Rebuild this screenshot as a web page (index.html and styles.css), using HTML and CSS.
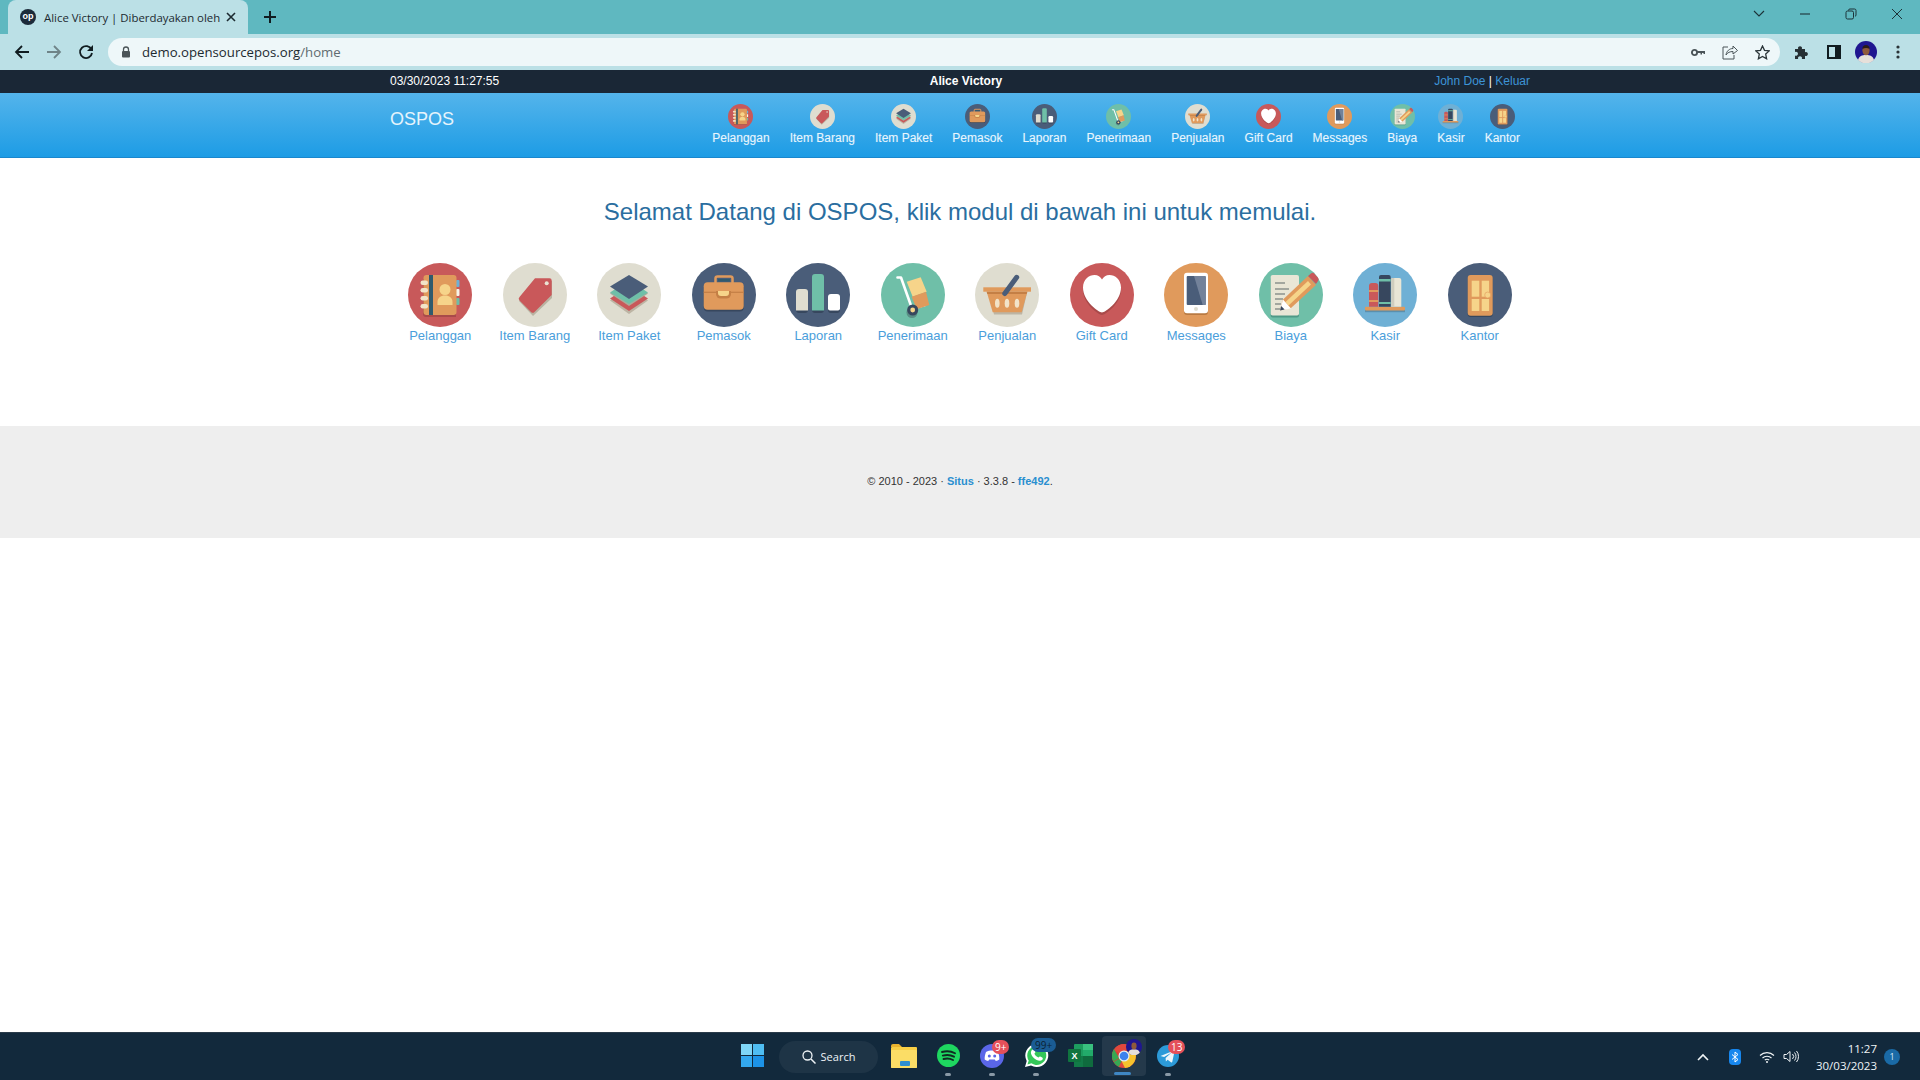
FILE: index.html
```html
<!DOCTYPE html>
<html lang="id">
<head>
<meta charset="utf-8">
<title>Alice Victory | OSPOS</title>
<link rel="stylesheet" href="styles.css">
</head>
<body>
<svg class="defs" width="0" height="0" aria-hidden="true">
  <symbol id="i-pelanggan" viewBox="0 0 64 64">
    <circle cx="32" cy="32" r="32" fill="#c8595a"/>
    <path d="M15 16h33v38H18a3 3 0 0 1-3-3z" fill="#a94a4a"/>
    <rect x="48" y="17" width="3.5" height="7" rx="1" fill="#6cb0d5"/>
    <rect x="48" y="26" width="3.5" height="7" rx="1" fill="#f7f4ea"/>
    <rect x="48" y="35" width="3.5" height="7" rx="1" fill="#6dbda7"/>
    <rect x="15.500" y="12" width="33" height="40" rx="3" fill="#e09a5c"/>
    <rect x="21" y="12" width="4" height="40" fill="#2f5a6e"/>
    <rect x="12.500" y="17.500" width="7.500" height="4.500" rx="2.200" fill="#f2e3c8"/>
    <rect x="12.500" y="25" width="7.500" height="4.500" rx="2.200" fill="#f2e3c8"/>
    <rect x="12.500" y="33" width="7.500" height="4.500" rx="2.200" fill="#f2e3c8"/>
    <rect x="12.500" y="41" width="7.500" height="4.500" rx="2.200" fill="#f2e3c8"/>
    <circle cx="37" cy="26.500" r="5.500" fill="#f6d48a"/>
    <path d="M29.500 42v-3c0-4 3-6.500 7.500-6.500s7.500 2.500 7.500 6.500v3z" fill="#f6d48a"/>
  </symbol>
  <symbol id="i-barang" viewBox="0 0 64 64">
    <circle cx="32" cy="32" r="32" fill="#dfddd0"/>
    <path d="M31 18h18v17L30 53 16 38z" fill="#b9b3a2"/>
    <path d="M32 15.300h14.500a2.200 2.200 0 0 1 2.200 2.200V32L31.500 49a2.500 2.500 0 0 1-3.500 0L16.500 37.500a2.500 2.500 0 0 1 0-3.500z" fill="#c9585a"/>
    <circle cx="43.700" cy="20.300" r="2" fill="#e9e3d3"/>
  </symbol>
  <symbol id="i-paket" viewBox="0 0 64 64">
    <circle cx="32" cy="32" r="32" fill="#dfddd0"/>
    <path d="M32 24l19 13.500L32 51 13 37.500z" fill="#bdb5a4"/>
    <path d="M32 23l19 12.500L32 48 13 35.500z" fill="#c9585a"/>
    <path d="M32 19l19 11.500L32 43 13 30.500z" fill="#a9ac9b"/>
    <path d="M32 17l19 12.500L32 41 13 29.500z" fill="#6fbfa8"/>
    <path d="M32 12l19 11.500L32 36 13 23.500z" fill="#4a5d79"/>
  </symbol>
  <symbol id="i-pemasok" viewBox="0 0 64 64">
    <circle cx="32" cy="32" r="32" fill="#4a5d79"/>
    <rect x="23.500" y="13.500" width="17" height="9" rx="2" fill="none" stroke="#e09a5c" stroke-width="2.500"/>
    <rect x="26" y="16" width="12" height="2.500" fill="#2f5a6e"/>
    <rect x="11.700" y="21" width="40" height="27.500" rx="4" fill="#37475e"/>
    <rect x="11.700" y="19.300" width="40" height="27.500" rx="4" fill="#e09a5c"/>
    <rect x="11.700" y="28.700" width="40" height="1.200" fill="#c47f45"/>
    <path d="M24 28h15v3a4.500 4.500 0 0 1-4.500 4.500h-6A4.500 4.500 0 0 1 24 31z" fill="#c47f45"/>
    <path d="M26 28h11v2a3 3 0 0 1-3 3h-5a3 3 0 0 1-3-3z" fill="#f6d48a"/>
  </symbol>
  <symbol id="i-laporan" viewBox="0 0 64 64">
    <circle cx="32" cy="32" r="32" fill="#4a5d79"/>
    <rect x="10" y="28" width="12" height="22" rx="3" fill="#37475e"/>
    <rect x="26" y="13" width="12" height="37" rx="3" fill="#37475e"/>
    <rect x="42" y="33" width="12" height="17" rx="3" fill="#37475e"/>
    <path d="M10 29a3 3 0 0 1 3-3h6a3 3 0 0 1 3 3v18.500H10z" fill="#dfddd0"/>
    <path d="M26 14a3 3 0 0 1 3-3h6a3 3 0 0 1 3 3v33.500H26z" fill="#6fbfa8"/>
    <path d="M42 34a3 3 0 0 1 3-3h6a3 3 0 0 1 3 3v11.500a2 2 0 0 1-2 2h-8a2 2 0 0 1-2-2z" fill="#fff"/>
  </symbol>
  <symbol id="i-penerimaan" viewBox="0 0 64 64">
    <circle cx="32" cy="32" r="32" fill="#6fbfa8"/>
    <path d="M16.500 14.500h3.500l11 31 13-3.500" fill="none" stroke="#fff" stroke-width="2.600" stroke-linejoin="round" stroke-linecap="round"/>
    <path d="M25.700 18.700l14-4.400 6 14.400-14 5z" fill="#f6d48a"/>
    <path d="M30.700 33.700l14.300-5 3.300 13.300-12.600 4.300z" fill="#e09a5c"/>
    <circle cx="31" cy="49.500" r="5.500" fill="#5a8f85"/>
    <circle cx="31.700" cy="47" r="5.500" fill="#37475e"/>
    <circle cx="31.700" cy="47" r="2.400" fill="#f6d48a"/>
  </symbol>
  <symbol id="i-penjualan" viewBox="0 0 64 64">
    <circle cx="32" cy="32" r="32" fill="#dfddd0"/>
    <path d="M14 30h38l-5 21.500H19z" fill="#bdb5a4"/>
    <rect x="8.300" y="24.300" width="47.700" height="4.400" fill="#e09a5c"/>
    <path d="M11.700 28.700h40.600l-5.600 20.600H17.700z" fill="#e09a5c"/>
    <path d="M11.700 28.700h40.600l-.6 2.200H12.300z" fill="#c47f45"/>
    <ellipse cx="22.300" cy="40.300" rx="2.300" ry="4.500" fill="#f2e3c8"/>
    <ellipse cx="32" cy="40.300" rx="2.300" ry="4.500" fill="#f2e3c8"/>
    <ellipse cx="42" cy="40.300" rx="2.300" ry="4.500" fill="#f2e3c8"/>
    <path d="M29.800 30.500L41.700 14.300" stroke="#4a5d79" stroke-width="5" stroke-linecap="round"/>
  </symbol>
  <symbol id="i-gift" viewBox="0 0 64 64">
    <circle cx="32" cy="32" r="32" fill="#c8595a"/>
    <path d="M32 52c-3 0-19-11-19-25 0-8 6-13 11.500-13 3.500 0 6 2 7.500 4.500C33.500 16 36 14 39.500 14 45 14 51 19 51 27c0 14-16 25-19 25z" fill="#a94a4a"/>
    <path d="M32 49.500c-3 0-19-11-19-25 0-8 6-12.500 11.500-12.500 3.500 0 6 2 7.500 4.500C33.500 14 36 12 39.500 12 45 12 51 16.500 51 24.500c0 14-16 25-19 25z" fill="#fff"/>
  </symbol>
  <symbol id="i-messages" viewBox="0 0 64 64">
    <circle cx="32" cy="32" r="32" fill="#e09a5c"/>
    <rect x="20" y="11" width="24" height="41" rx="3" fill="#b97a42"/>
    <rect x="20" y="9.700" width="24" height="40.600" rx="3" fill="#fff"/>
    <rect x="22.700" y="13" width="19" height="29" rx="1" fill="#4a5d79"/>
    <path d="M30 13h10.700a1 1 0 0 1 1 1v28h-3z" fill="#73829a"/>
    <circle cx="32" cy="46" r="2" fill="#dfddd0"/>
  </symbol>
  <symbol id="i-biaya" viewBox="0 0 64 64">
    <circle cx="32" cy="32" r="32" fill="#6fbfa8"/>
    <rect x="11.700" y="14" width="28.300" height="40.500" rx="2" fill="#4f9a86"/>
    <rect x="11.700" y="12" width="28.300" height="40.500" rx="2" fill="#e9e6d6"/>
    <path d="M16 20h10M16 26h14M16 31h10M16 36h8M16 41h6M16 46h5" stroke="#8c938d" stroke-width="1.300"/>
    <path d="M21 47.500l3-11 25-23.500 8 9-25 23z" fill="#e09a5c"/>
    <path d="M26.500 39L49 18l3 3.500-22.500 21z" fill="#f6d48a"/>
    <path d="M49 13l3-2.500a2.500 2.500 0 0 1 3.200 0l3.800 4.300a2.500 2.500 0 0 1 0 3.200l-2 3z" fill="#c9585a"/>
    <path d="M21 47.500l3-11 8 9z" fill="#fff"/>
    <path d="M21 47.500l1.100-4.500 3.500 3.500z" fill="#37475e"/>
  </symbol>
  <symbol id="i-kasir" viewBox="0 0 64 64">
    <circle cx="32" cy="32" r="32" fill="#6fb0d5"/>
    <rect x="12" y="46" width="40" height="3.200" fill="#5b8fad"/>
    <rect x="12" y="43.700" width="40" height="3.800" rx="1" fill="#e09a5c"/>
    <path d="M16 23a3 3 0 0 1 3-3h3.300a3 3 0 0 1 3 3v20.700H16z" fill="#c9585a"/>
    <rect x="16" y="27" width="9.300" height="2" fill="#e09a5c"/>
    <rect x="16" y="37" width="9.300" height="2" fill="#e09a5c"/>
    <path d="M26 14a2 2 0 0 1 2-2h7.700a2 2 0 0 1 2 2v29.700H26z" fill="#37475e"/>
    <rect x="26" y="16" width="11.700" height="2.500" fill="#6fbfa8"/>
    <rect x="26" y="39" width="11.700" height="2" fill="#6fbfa8"/>
    <path d="M38.300 17a2 2 0 0 1 2-2h6a2 2 0 0 1 2 2v26.700h-10z" fill="#e9e6d6"/>
    <rect x="38.300" y="15" width="3" height="28.700" fill="#cfcdbe"/>
  </symbol>
  <symbol id="i-kantor" viewBox="0 0 64 64">
    <circle cx="32" cy="32" r="32" fill="#4a5d79"/>
    <rect x="19.700" y="13" width="25" height="41" rx="3" fill="#37475e"/>
    <rect x="19.700" y="12" width="25" height="40.700" rx="3" fill="#e09a5c"/>
    <rect x="23.700" y="17.700" width="7.600" height="16" fill="#f6d48a"/>
    <rect x="33.700" y="17.700" width="7.400" height="16" fill="#f6d48a"/>
    <rect x="23.700" y="36" width="7.600" height="12" fill="#f6d48a"/>
    <rect x="33.700" y="36" width="7.400" height="12" fill="#f6d48a"/>
    <circle cx="39.700" cy="32" r="3" fill="#f6d48a" stroke="#e09a5c" stroke-width=".6"/>
  </symbol>
</svg>

<div class="app">
  <div class="tabstrip">
    <div class="tab">
      <span class="favicon">op</span>
      <span class="tab-title">Alice Victory | Diberdayakan oleh</span>
      <svg class="tab-close" width="10" height="10" viewBox="0 0 10 10"><path d="M1 1l8 8M9 1l-8 8" stroke="#1c2a30" stroke-width="1.600"/></svg>
    </div>
    <svg class="tab-new" width="14" height="14" viewBox="0 0 14 14"><path d="M7 1v12M1 7h12" stroke="#101c20" stroke-width="2"/></svg>
    <div class="win-controls">
      <span class="win-btn"><svg width="12" height="8" viewBox="0 0 12 8"><path d="M1 1l5 5 5-5" fill="none" stroke="#1c3238" stroke-width="1.100"/></svg></span>
      <span class="win-btn"><svg width="12" height="2" viewBox="0 0 12 2"><path d="M1 1h10" stroke="#1c3238" stroke-width="1.100"/></svg></span>
      <span class="win-btn"><svg width="12" height="12" viewBox="0 0 12 12"><path d="M3.500 2.500V2a1.500 1.500 0 0 1 1.500-1h4.500A1.500 1.500 0 0 1 11 2.500V7a1.500 1.500 0 0 1-1 1.400" fill="none" stroke="#1c3238"/><rect x="1" y="3" width="7.500" height="8" rx="1.500" fill="none" stroke="#1c3238"/></svg></span>
      <span class="win-btn"><svg width="12" height="12" viewBox="0 0 12 12"><path d="M1 1l10 10M11 1L1 11" stroke="#1c3238" stroke-width="1"/></svg></span>
    </div>
  </div>

  <div class="toolbar">
    <span class="tool-btn"><svg width="16" height="16" viewBox="0 0 16 16"><path d="M15 8H2M8 2L2 8l6 6" fill="none" stroke="#101c20" stroke-width="1.800"/></svg></span>
    <span class="tool-btn"><svg width="16" height="16" viewBox="0 0 16 16"><path d="M1 8h13M8 2l6 6-6 6" fill="none" stroke="#6f8488" stroke-width="1.800"/></svg></span>
    <span class="tool-btn"><svg width="16" height="16" viewBox="0 0 16 16"><path d="M13.500 5.500A6 6 0 1 0 14 9" fill="none" stroke="#101c20" stroke-width="1.800"/><path d="M15 1v6H9z" fill="#101c20"/></svg></span>
    <div class="omnibox">
      <svg class="lock" width="10" height="12" viewBox="0 0 10 12"><path d="M2.500 5V3.500a2.500 2.500 0 0 1 5 0V5" fill="none" stroke="#4a5458" stroke-width="1.300"/><rect x="1" y="5" width="8" height="6.500" rx="1" fill="#4a5458"/></svg>
      <span class="url">demo.opensourcepos.org<span class="url-path">/home</span></span>
      <span class="omni-btn"><svg width="14" height="9" viewBox="0 0 14 9"><circle cx="3.500" cy="4.500" r="2.600" fill="none" stroke="#4a5458" stroke-width="1.900"/><path d="M6 3h8v3h-1.500V5H11v1.500H9.500V5H6z" fill="#4a5458"/></svg></span>
      <span class="omni-btn"><svg width="16" height="16" viewBox="0 0 16 16"><path d="M6 3H1v12h11v-4" fill="none" stroke="#4a5458"/><path d="M4 11c.5-4 3.500-6.500 7-6.500V2l4.500 4.500L11 10V7.500C8 7.500 5.500 8.500 4 11z" fill="none" stroke="#4a5458"/></svg></span>
      <span class="omni-btn"><svg width="15" height="15" viewBox="0 0 15 15"><path d="M7.500 1l2 4.300 4.700.6-3.500 3.200.9 4.700-4.100-2.300-4.100 2.300.9-4.700L.8 5.900l4.700-.6z" fill="none" stroke="#2a3438" stroke-width="1.300"/></svg></span>
    </div>
    <span class="tool-btn"><svg width="16" height="16" viewBox="0 0 16 16"><path d="M1 5h3.200a2 2 0 1 1 3.600 0H11v3.200a2 2 0 1 1 0 3.600V15H7.800a2 2 0 1 0-3.600 0H1v-3.500a2 2 0 1 0 0-3.500z" fill="#263034"/></svg></span>
    <span class="tool-btn"><svg width="14" height="14" viewBox="0 0 14 14"><rect x="1" y="1" width="12" height="12" fill="none" stroke="#101c20" stroke-width="2"/><rect x="8" y="1" width="5" height="12" fill="#101c20"/></svg></span>
    <span class="tool-btn"><svg width="22" height="22" viewBox="0 0 22 22"><circle cx="11" cy="11" r="11" fill="#1f1690"/><path d="M3 19c1-4 4-5 8-5s7 1 8 5a11 11 0 0 1-16 0z" fill="#e6e0da"/><ellipse cx="11" cy="9.500" rx="3.600" ry="4.800" fill="#8f5a3c"/><path d="M7.400 8c0-3 1.600-4 3.600-4s3.600 1 3.600 4c-2-1.500-5-1.500-7.200 0z" fill="#2a1a18"/></svg></span>
    <span class="tool-btn"><svg width="4" height="14" viewBox="0 0 4 14"><circle cx="2" cy="2" r="1.600" fill="#2a3438"/><circle cx="2" cy="7" r="1.600" fill="#2a3438"/><circle cx="2" cy="12" r="1.600" fill="#2a3438"/></svg></span>
  </div>

  <main class="page">
    <div class="topbar">
      <div class="container topbar-row">
        <span class="clock">03/30/2023 11:27:55</span>
        <b class="company">Alice Victory</b>
        <span class="user"><a>John Doe</a> | <a>Keluar</a></span>
      </div>
    </div>
    <nav class="navbar">
      <div class="container navbar-row">
        <span class="brand">OSPOS</span>
        <ul class="nav">
          <li class="nav-item"><svg class="nav-icon"><use href="#i-pelanggan"/></svg>Pelanggan</li>
          <li class="nav-item"><svg class="nav-icon"><use href="#i-barang"/></svg>Item Barang</li>
          <li class="nav-item"><svg class="nav-icon"><use href="#i-paket"/></svg>Item Paket</li>
          <li class="nav-item"><svg class="nav-icon"><use href="#i-pemasok"/></svg>Pemasok</li>
          <li class="nav-item"><svg class="nav-icon"><use href="#i-laporan"/></svg>Laporan</li>
          <li class="nav-item"><svg class="nav-icon"><use href="#i-penerimaan"/></svg>Penerimaan</li>
          <li class="nav-item"><svg class="nav-icon"><use href="#i-penjualan"/></svg>Penjualan</li>
          <li class="nav-item"><svg class="nav-icon"><use href="#i-gift"/></svg>Gift Card</li>
          <li class="nav-item"><svg class="nav-icon"><use href="#i-messages"/></svg>Messages</li>
          <li class="nav-item"><svg class="nav-icon"><use href="#i-biaya"/></svg>Biaya</li>
          <li class="nav-item"><svg class="nav-icon"><use href="#i-kasir"/></svg>Kasir</li>
          <li class="nav-item"><svg class="nav-icon"><use href="#i-kantor"/></svg>Kantor</li>
        </ul>
      </div>
    </nav>
    <section class="home">
      <h1 class="welcome">Selamat Datang di OSPOS, klik modul di bawah ini untuk memulai.</h1>
      <div class="modules">
        <a class="module"><svg class="module-icon"><use href="#i-pelanggan"/></svg>Pelanggan</a>
        <a class="module"><svg class="module-icon"><use href="#i-barang"/></svg>Item Barang</a>
        <a class="module"><svg class="module-icon"><use href="#i-paket"/></svg>Item Paket</a>
        <a class="module"><svg class="module-icon"><use href="#i-pemasok"/></svg>Pemasok</a>
        <a class="module"><svg class="module-icon"><use href="#i-laporan"/></svg>Laporan</a>
        <a class="module"><svg class="module-icon"><use href="#i-penerimaan"/></svg>Penerimaan</a>
        <a class="module"><svg class="module-icon"><use href="#i-penjualan"/></svg>Penjualan</a>
        <a class="module"><svg class="module-icon"><use href="#i-gift"/></svg>Gift Card</a>
        <a class="module"><svg class="module-icon"><use href="#i-messages"/></svg>Messages</a>
        <a class="module"><svg class="module-icon"><use href="#i-biaya"/></svg>Biaya</a>
        <a class="module"><svg class="module-icon"><use href="#i-kasir"/></svg>Kasir</a>
        <a class="module"><svg class="module-icon"><use href="#i-kantor"/></svg>Kantor</a>
      </div>
    </section>
    <footer class="footer">© 2010 - 2023 · <a>Situs</a> · 3.3.8 - <a>ffe492</a>.</footer>
  </main>

  <div class="taskbar">
    <div class="tb-side"></div>
    <div class="tb-center">
      <span class="tb-item"><svg width="23" height="23" viewBox="0 0 23 23"><rect width="11" height="11" fill="#7fd6f7"/><rect x="12" width="11" height="11" fill="#4fbdf2"/><rect y="12" width="11" height="11" fill="#33a8ee"/><rect x="12" y="12" width="11" height="11" fill="#1c92e6"/></svg></span>
      <span class="tb-search"><svg width="14" height="14" viewBox="0 0 14 14"><circle cx="5.500" cy="5.500" r="4.500" fill="none" stroke="#eef3f6" stroke-width="1.300"/><path d="M9 9l4.500 4.500" stroke="#eef3f6" stroke-width="1.500"/></svg>Search</span>
      <span class="tb-item"><svg width="26" height="24" viewBox="0 0 26 24"><path d="M0 2a2 2 0 0 1 2-2h6l3 3h-11z" fill="#e9b32e"/><rect y="3" width="26" height="21" rx="1" fill="#f8cf45"/><rect y="6" width="26" height="18" rx="1" fill="#fbdd66"/><rect x="9" y="17" width="10" height="5" rx="1" fill="#2f8fd0"/></svg></span>
      <span class="tb-item tb-open"><svg width="23" height="23" viewBox="0 0 23 23"><circle cx="11.500" cy="11.500" r="11.500" fill="#1ed760"/><path d="M5 8c4-1.200 9-1 13 1.300M5.800 11.600c3.600-1 7.800-.8 11.200 1.100M6.500 15c3-.8 6.600-.6 9.500 1" fill="none" stroke="#102a22" stroke-width="1.900" stroke-linecap="round"/></svg></span>
      <span class="tb-item tb-open"><svg width="24" height="24" viewBox="0 0 24 24"><circle cx="12" cy="12" r="12" fill="#5a66e8"/><path d="M6 8c2-1.200 4-1.500 6-1.500S16 6.800 18 8c1 2.500 1.500 5 1.300 7.500-1 .8-2.200 1.300-3.500 1.500l-1-1.500h-5.600l-1 1.500c-1.300-.2-2.500-.7-3.500-1.500C4.500 13 5 10.500 6 8z" fill="#fff"/><circle cx="9.300" cy="12" r="1.500" fill="#5a66e8"/><circle cx="14.700" cy="12" r="1.500" fill="#5a66e8"/></svg><span class="badge badge-red">9+</span></span>
      <span class="tb-item tb-open"><svg width="25" height="25" viewBox="0 0 25 25"><path d="M1 24l1.700-6A11.500 11.500 0 1 1 7 22.400z" fill="#fff"/><path d="M3.500 21.500l1.200-4A9.500 9.500 0 1 1 7.400 20.300z" fill="#34c759"/><path d="M8.500 6.500c1-.8 2-.5 2.300.5l.6 2c0 .6-.7 1.200-1 1.700.8 1.600 2.200 3 4 3.800.6-.3 1.200-1.200 1.800-1l2 .9c.8.400.8 1.500.1 2.300-1.300 1.500-3.600 1.300-6.100 0-2.500-1.300-4.700-3.800-5.200-6.300-.3-1.500.3-3 1.500-3.900z" fill="#fff"/></svg><span class="badge badge-blue">99+</span></span>
      <span class="tb-item"><svg width="25" height="23" viewBox="0 0 25 23"><rect x="6" width="19" height="23" rx="1" fill="#1d9c5f"/><rect x="15" width="10" height="6" fill="#39c07f"/><rect x="15" y="6" width="10" height="6" fill="#22ab6a"/><rect x="6" y="12" width="9" height="11" fill="#127a48"/><rect x="15" y="12" width="10" height="11" fill="#0f6b3e"/><rect y="5" width="13" height="13" rx="1" fill="#10743f"/><text x="6.500" y="15" class="xl-letter" text-anchor="middle">X</text></svg></span>
      <span class="tb-item tb-active"><svg width="24" height="24" viewBox="0 0 24 24"><circle cx="12" cy="12" r="12" fill="#e1483d"/><path d="M12 12L1.600 18A12 12 0 0 1 1.600 6z" fill="#d93d33"/><path d="M12 12l-5.200 10.800A12 12 0 0 1 1.600 18z" fill="#37a853"/><path d="M12 7h10.800A12 12 0 0 1 13 24l-3-6z" fill="#f7c32d"/><path d="M2 5l5 9-5.500 3.500a12 12 0 0 1 .5-12.500z" fill="#37a853"/><path d="M2.500 4.700A12 12 0 0 1 22.800 7H12a5 5 0 0 0-4.500 3z" fill="#e1483d"/><circle cx="12" cy="12" r="5.500" fill="#e4eef4"/><circle cx="12" cy="12" r="4.300" fill="#3b82ee"/></svg><svg class="tb-avatar" width="16" height="16" viewBox="0 0 22 22"><circle cx="11" cy="11" r="11" fill="#1f1690"/><path d="M3 19c1-4 4-5 8-5s7 1 8 5a11 11 0 0 1-16 0z" fill="#e6e0da"/><ellipse cx="11" cy="9.500" rx="3.600" ry="4.800" fill="#8f5a3c"/></svg></span>
      <span class="tb-item tb-open"><svg width="22" height="22" viewBox="0 0 22 22"><circle cx="11" cy="11" r="11" fill="#2c9ad8"/><path d="M3.500 11l13-5.300c.6-.2 1.100.2 1 .9l-2.200 10.200c-.1.700-.8.900-1.300.5l-3.400-2.500-1.700 1.600-.3-3.500 6-5.500-7.500 4.700z" fill="#eef7fb"/></svg><span class="badge badge-red">13</span></span>
    </div>
    <div class="tb-side tb-tray">
      <svg width="12" height="8" viewBox="0 0 12 8"><path d="M1 7l5-5 5 5" fill="none" stroke="#f0f4f6" stroke-width="1.600"/></svg>
      <span class="tray-bt"><svg width="8" height="12" viewBox="0 0 8 12"><path d="M1 3.500l6 5L4 11V1l3 2.500-6 5" fill="none" stroke="#fff"/></svg></span>
      <svg class="tray-wifi" width="16" height="12" viewBox="0 0 16 12"><path d="M1 4.500a10 10 0 0 1 14 0M3.500 7a6.500 6.500 0 0 1 9 0M5.800 9.200a3 3 0 0 1 4.400 0" fill="none" stroke="#f0f4f6" stroke-width="1.100"/><circle cx="8" cy="11" r="1" fill="#f0f4f6"/></svg>
      <svg class="tray-vol" width="16" height="13" viewBox="0 0 16 13"><path d="M1 4.500h2.500L7 1.500v10L3.500 8.500H1z" fill="none" stroke="#f0f4f6"/><path d="M9.500 4a3.500 3.500 0 0 1 0 5M11.500 2.500a6 6 0 0 1 0 8M13.500 1a8.500 8.500 0 0 1 0 11" fill="none" stroke="#f0f4f6"/></svg>
      <span class="tray-time"><span>11:27</span><span>30/03/2023</span></span>
      <span class="tray-badge">1</span>
    </div>
  </div>
</div>
</body>
</html>
```

FILE: styles.css
```css
* { box-sizing: border-box; }
html, body { margin: 0; height: 100%; }
body { font-family: "Liberation Sans", Arial, sans-serif; background: #fff; overflow: hidden; }
.defs { position: absolute; }
.app { height: 100vh; display: flex; flex-direction: column; }

/* browser chrome */
.tabstrip { height: 34px; background: #5fb8c0; display: flex; align-items: flex-end; padding-left: 8px; flex: none; }
.tab { width: 240px; height: 34px; background: #bbe0e6; border-radius: 8px 8px 0 0; display: flex; align-items: center; padding: 0 12px; gap: 8px; }
.favicon { width: 16px; height: 16px; border-radius: 50%; background: #1c2b3a; color: #fff; font: 700 9px/15px "Liberation Sans", sans-serif; text-align: center; flex: none; }
.tab-title { flex: 1; min-width: 0; white-space: nowrap; font: 11.400px "Open Sans", sans-serif; color: #1c2a30; }
.tab-close { flex: none; margin-left: 2px; }
.tab-new { align-self: center; margin-left: 15px; }
.win-controls { margin-left: auto; display: flex; align-self: stretch; }
.win-btn { width: 46px; display: flex; align-items: center; justify-content: center; height: 28px; }

.toolbar { height: 36px; background: #bbe0e6; display: flex; align-items: center; padding: 0 6px; flex: none; }
.tool-btn { width: 32px; height: 32px; display: flex; align-items: center; justify-content: center; flex: none; }
.omnibox { flex: 1; height: 28px; margin: 0 6px; border-radius: 14px; background: #eef7f9; display: flex; align-items: center; padding: 0 2px 0 13px; }
.lock { margin-right: 11px; }
.url { flex: 1; font: 13.200px "Open Sans", sans-serif; color: #1c2a30; }
.url-path { color: #5f6b70; }
.omni-btn { width: 32px; height: 28px; display: flex; align-items: center; justify-content: center; }

/* app header */
.page { flex: 1; min-height: 0; display: flex; flex-direction: column; }
.container { width: 1170px; margin: 0 auto; padding: 0 15px; }
.topbar { height: 23px; padding-bottom: 2px; background: #1a2736; color: #fff; font-size: 12px; flex: none; }
.topbar-row { display: grid; grid-template-columns: 1fr auto 1fr; align-items: center; height: 100%; }
.company { margin-left: 12px; }
.user { justify-self: end; }
.user a { color: #3d94d6; }
.navbar { height: 65px; background: linear-gradient(#54b4eb, #1d9ce5); border-bottom: 1px solid #1a87cd; flex: none; }
.navbar-row { display: flex; height: 100%; }
.brand { font-size: 18px; color: #e6f4fc; margin-top: 16px; line-height: 20px; }
.nav { list-style: none; margin: 0 0 0 auto; padding: 0; display: flex; }
.nav-item { padding: 9px 10px 0; display: flex; flex-direction: column; align-items: center; font-size: 12px; line-height: 17px; color: #e8f5fd; text-shadow: 0 0 1px rgba(255,255,255,.3); white-space: nowrap; }
.nav-icon { width: 25px; height: 25px; margin: 2px 0 1px; display: block; }

/* home */
.home { flex: none; height: 268px; padding-top: 41px; }
.welcome { margin: 0; font-size: 24px; font-weight: 400; line-height: 26px; color: #2a6ea0; text-align: center; }
.modules { display: flex; justify-content: center; margin-top: 38px; }
.module { width: 94.500px; display: flex; flex-direction: column; align-items: center; font-size: 13px; line-height: 17px; color: #4a9edb; white-space: nowrap; }
.module-icon { width: 64px; height: 64px; display: block; }
.footer { height: 112px; padding-bottom: 2px; background: #eee; flex: none; display: flex; align-items: center; justify-content: center; white-space: pre; font-size: 11px; color: #333; }
.footer a { color: #2a8fd0; font-weight: 700; }

/* taskbar */
.taskbar { height: 48px; flex: none; background: #12293c; display: grid; grid-template-columns: 1fr auto 1fr; align-items: center; border-top: 1px solid #2a3b4a; }
.tb-center { display: flex; align-items: center; height: 100%; }
.tb-item { position: relative; width: 44px; height: 100%; display: flex; align-items: center; justify-content: center; margin-top: -2px; }
.tb-open::after { content: ""; position: absolute; left: 19px; bottom: 3px; width: 6px; height: 3px; border-radius: 2px; background: #8a99a6; }
.tb-active { background: #24394b; border-radius: 4px; height: 40px; margin-top: -2px; }
.tb-active::after { content: ""; position: absolute; left: 12px; bottom: 1px; width: 17px; height: 3px; border-radius: 2px; background: #3f87c4; }
.tb-avatar { position: absolute; left: 24px; top: 3px; }
.tb-search { width: 99px; height: 32px; margin: 0 4px 0 5px; border-radius: 16px; background: #1e3446; color: #eef3f6; font: 11px "Open Sans", sans-serif; display: flex; align-items: center; justify-content: center; gap: 5px; }
.xl-letter { font: 700 9px "Liberation Sans", sans-serif; fill: #fff; }
.badge { position: absolute; top: 8px; left: 22px; height: 14px; min-width: 15px; padding: 0 3px; border-radius: 7px; color: #fff; font: 10px/14px "Open Sans", sans-serif; text-align: center; }
.badge-red { background: #e4505a; }
.badge-blue { background: #1a5c94; left: 17px; top: 6px; padding: 0 4px; color: #0b2233; }
.tb-tray { display: flex; align-items: center; justify-content: flex-end; padding-right: 20px; color: #eef3f6; }
.tray-bt { width: 12px; height: 16px; border-radius: 4px; background: #1787ee; display: flex; align-items: center; justify-content: center; margin-left: 20px; }
.tray-wifi { margin-left: 18px; }
.tray-vol { margin-left: 8px; }
.tray-time { display: flex; flex-direction: column; align-items: flex-end; font: 11.500px/17px "Open Sans", sans-serif; margin-left: 17px; }
.tray-badge { width: 16px; height: 16px; margin-left: 7px; border-radius: 50%; background: #1a6aa6; color: #d8ecf8; font: 9px/16px "Open Sans", sans-serif; text-align: center; }
```
